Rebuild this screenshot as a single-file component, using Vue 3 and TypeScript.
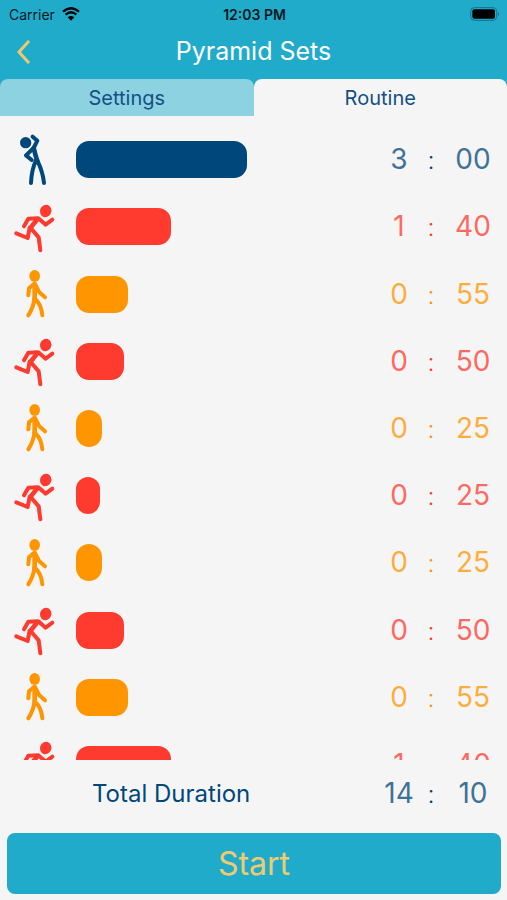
<script setup lang="ts">
import { computed, ref } from 'vue'

type Kind = 'stretch' | 'run' | 'walk'
type Tab = 'settings' | 'routine'

interface Step {
  kind: Kind
  seconds: number
  bar: number
}

const tab = ref<Tab>('routine')

const steps: Step[] = [
  { kind: 'stretch', seconds: 180, bar: 171 },
  { kind: 'run', seconds: 100, bar: 95 },
  { kind: 'walk', seconds: 55, bar: 52 },
  { kind: 'run', seconds: 50, bar: 48 },
  { kind: 'walk', seconds: 25, bar: 26 },
  { kind: 'run', seconds: 25, bar: 24 },
  { kind: 'walk', seconds: 25, bar: 26 },
  { kind: 'run', seconds: 50, bar: 48 },
  { kind: 'walk', seconds: 55, bar: 52 },
  { kind: 'run', seconds: 100, bar: 95 },
  { kind: 'stretch', seconds: 185, bar: 171 },
]

const total = computed(() => steps.reduce((sum, s) => sum + s.seconds, 0))

const minutes = (s: number): string => String(Math.floor(s / 60))
const rest = (s: number): string => String(s % 60).padStart(2, '0')
</script>

<template>
  <div class="screen">
    <header class="top">
      <div class="status">
        <div class="carrier">
          <span>Carrier</span>
          <svg class="wifi" viewBox="0 0 54 42" aria-hidden="true">
            <path d="M3 14 Q27 -7 51 14" />
            <path d="M11 23 Q27 9 43 23" />
            <path class="dot" d="M27 41 L17 31 Q27 23 37 31 Z" />
          </svg>
        </div>
        <span class="clock">12:03 PM</span>
        <svg class="battery" viewBox="0 0 90 42" aria-hidden="true">
          <rect class="shell" x="2" y="2" width="78" height="38" rx="11" />
          <rect x="7" y="7" width="68" height="28" rx="6" />
          <path class="cap" d="M84 14 Q90 21 84 28 Z" />
        </svg>
      </div>
      <div class="nav">
        <button class="back" type="button" aria-label="Back">
          <svg viewBox="0 0 16 24" aria-hidden="true"><path d="M13 1 L3 12 L13 23" /></svg>
        </button>
        <h1>Pyramid Sets</h1>
      </div>
      <div class="tabs" role="tablist">
        <button
          type="button" role="tab" class="tab" :class="{ active: tab === 'settings' }"
          :aria-selected="tab === 'settings'" @click="tab = 'settings'"
        >Settings</button>
        <button
          type="button" role="tab" class="tab" :class="{ active: tab === 'routine' }"
          :aria-selected="tab === 'routine'" @click="tab = 'routine'"
        >Routine</button>
      </div>
    </header>

    <ul class="list">
      <li v-for="(step, i) in steps" :key="i" class="row" :class="step.kind">
        <svg v-if="step.kind === 'stretch'" class="figure" viewBox="42 27 126 156" aria-hidden="true">
          <ellipse cx="77" cy="53" rx="17" ry="17" />
          <path d="M98 35 L112 47 L101 69 L78 91 L95 105" />
          <path d="M101 69 Q106 90 113 112" class="torso" />
          <path d="M109 104 Q95 132 93 174 M112 106 Q129 142 132 174" />
        </svg>
        <svg v-else-if="step.kind === 'run'" class="figure" viewBox="42 18 126 156" aria-hidden="true">
          <ellipse cx="137" cy="48" rx="17" ry="19" transform="rotate(20 137 48)" />
          <path d="M72 94 L85 71 L115 70 L137 89 L157 74" />
          <path d="M112 73 L91 99" class="torso" />
          <path d="M89 98 L83 129 L49 115 M92 99 L116 127 L121 166" />
        </svg>
        <svg v-else class="figure" viewBox="42 25 126 156" aria-hidden="true">
          <ellipse cx="104" cy="49" rx="16" ry="18" />
          <path d="M104 74 L104 117" class="torso" />
          <path d="M102 73 L87 86 L85 107 M106 75 L118 98 L135 113" />
          <path d="M103 117 Q102 140 85 167 M105 117 Q124 134 127 167" />
        </svg>
        <div class="track"><div class="bar" :style="{ width: step.bar + 'px' }"></div></div>
        <div class="time">
          <span class="digits">{{ minutes(step.seconds) }}</span>
          <span class="colon">:</span>
          <span class="digits">{{ rest(step.seconds) }}</span>
        </div>
      </li>
    </ul>

    <div class="total">
      <span class="label">Total Duration</span>
      <div class="time">
        <span class="digits">{{ minutes(total) }}</span>
        <span class="colon">:</span>
        <span class="digits">{{ rest(total) }}</span>
      </div>
    </div>

    <button class="start" type="button">Start</button>
  </div>
</template>

<style>
body {
  background: #f5f5f5;
}
</style>

<style scoped>
.screen {
  display: flex;
  flex-direction: column;
  height: 100vh;
  overflow: hidden;
  background: #f5f5f5;
  color: #00477b;
  font-family: Inter, "Liberation Sans", sans-serif;
}

button {
  margin: 0;
  padding: 0;
  border: 0;
  font: inherit;
  cursor: pointer;
}

.top {
  background: #21abcb;
}

.status {
  display: grid;
  grid-template-columns: 1fr auto 1fr;
  align-items: center;
  height: 28px;
  padding: 0 7px 0 9px;
  color: #06181d;
  font-size: 14px;
}

.carrier {
  display: flex;
  align-items: center;
  gap: 7px;
}

.wifi {
  width: 18px;
  height: 14px;
  fill: none;
  stroke: #000;
  stroke-width: 7;
}

.wifi .dot {
  fill: #000;
  stroke: none;
}

.clock {
  font-weight: 600;
}

.battery {
  width: 30px;
  height: 14px;
  justify-self: end;
}

.battery .shell {
  fill: none;
  stroke: #14708a;
  stroke-width: 3;
}

.battery .cap {
  fill: #14708a;
}

.nav {
  display: grid;
  grid-template-columns: 48px 1fr 48px;
  align-items: center;
  height: 51px;
}

.back {
  display: flex;
  align-items: center;
  justify-content: center;
  height: 44px;
  margin-bottom: 4px;
  background: none;
}

.back svg {
  width: 16px;
  height: 24px;
  fill: none;
  stroke: #eecb70;
  stroke-width: 3;
}

h1 {
  margin: 0;
  padding-bottom: 6px;
  color: #fff;
  font-size: 25px;
  font-weight: 400;
  line-height: 32px;
  text-align: center;
}

.tabs {
  display: grid;
  grid-template-columns: 1fr 1fr;
}

.tab {
  height: 37px;
  border-radius: 8px 8px 0 0;
  background: #8dd2e0;
  color: #135086;
  font-size: 20px;
}

.tab.active {
  background: #f5f5f5;
}

.list {
  display: grid;
  flex: 1;
  grid-auto-rows: 10.6%;
  min-height: 0;
  margin: 10px 0 0;
  padding: 0;
  overflow-y: auto;
  list-style: none;
  scrollbar-width: none;
}

.row {
  display: flex;
  align-items: center;
  padding: 0 6px 0 14px;
}

.stretch {
  color: #00477b;
}

.run {
  color: #ff3b30;
}

.walk {
  color: #ff9500;
}

.figure {
  width: 42px;
  height: 52px;
  margin-right: 20px;
  fill: none;
  stroke: currentColor;
  stroke-width: 12;
  stroke-linecap: round;
  stroke-linejoin: round;
}

.figure ellipse {
  fill: currentColor;
  stroke: none;
}

.figure .torso {
  stroke-width: 14;
}

.track {
  flex: 1;
}

.bar {
  height: 37px;
  border-radius: 13px;
  background: currentColor;
}

.time {
  display: grid;
  grid-template-columns: 36px 28px 56px;
  align-items: baseline;
  font-size: 28px;
  line-height: 36px;
  text-align: center;
}

.digits {
  opacity: 0.75;
}

.colon {
  font-size: 25px;
  font-weight: 300;
}

.total {
  display: flex;
  align-items: center;
  height: 67px;
  padding: 0 6px 0 92px;
}

.label {
  flex: 1;
  font-size: 24px;
}

.start {
  height: 61px;
  margin: 6px 6px 6px 7px;
  border-radius: 8px;
  background: #21abcb;
  color: #eecb70;
  font-size: 32px;
}
</style>
